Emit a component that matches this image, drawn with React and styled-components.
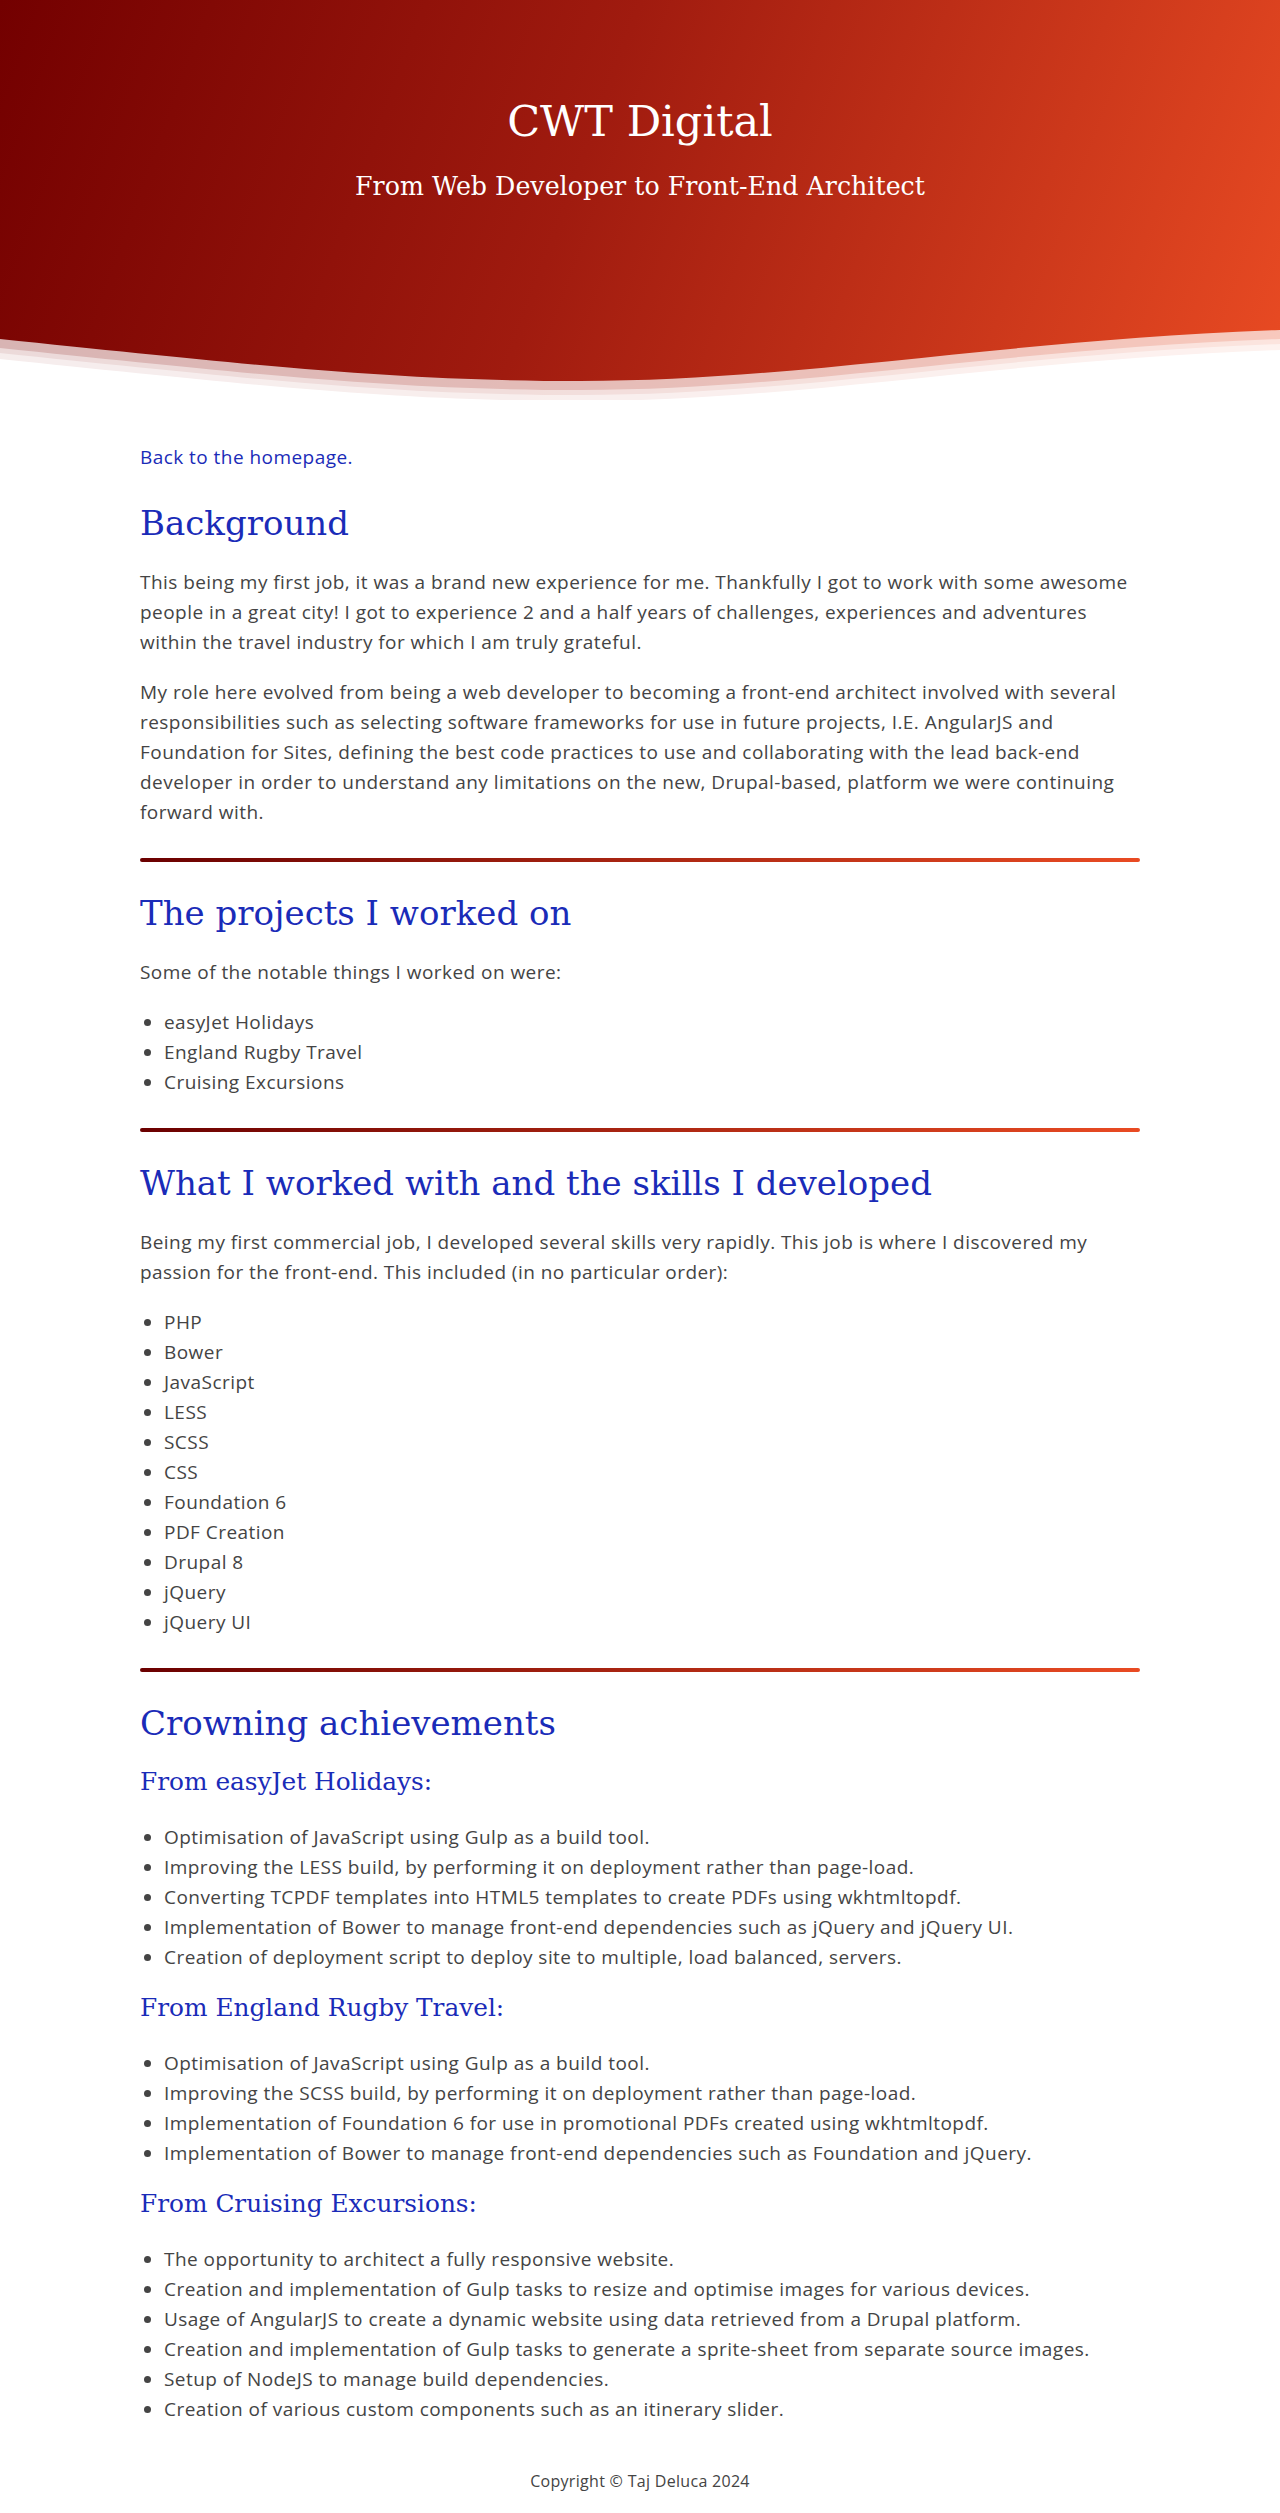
import React from 'react';
import styled, { createGlobalStyle } from 'styled-components';

const GlobalStyle = createGlobalStyle`
  * { box-sizing: border-box; }
  body {
    margin: 0;
    background: #fff;
    color: #444;
    font-family: "Open Sans", Lato, sans-serif;
  }
`

const Header = styled.header`
  background: linear-gradient(110deg, #730000 0%, #a01b0f 45%, #e94b23 100%);
  color: #fff;
  text-align: center;
`

const Hero = styled.div`
  height: 320px;
  padding-top: 95px;
`

const Title = styled.h1`
  margin: 0;
  font-family: "DejaVu Serif", serif;
  font-weight: normal;
  font-size: 43px;
  line-height: 53px;
`

const Subtitle = styled.p`
  margin: 24px 0 0;
  font-family: "DejaVu Serif", serif;
  font-size: 25.3px;
  line-height: 29px;
`

const WaveSvg = styled.svg`
  display: block;
  width: 100%;
  height: 80px;
`

const curve = (d) =>
  `M0,${19 + d} C260,${46 + d} 400,${61 + d} 580,${61 + d} C800,${61 + d} 1000,${20 + d} 1280,${10 + d} L1280,80 L0,80 Z`

const Wave = () => (
  <WaveSvg viewBox="0 0 1280 80" preserveAspectRatio="none">
    <path d={curve(0)} fill="#fff" opacity="0.7" />
    <path d={curve(9)} fill="#fff" opacity="0.5" />
    <path d={curve(14)} fill="#fff" opacity="0.5" />
    <path d={curve(20)} fill="#fff" />
  </WaveSvg>
)

const Main = styled.main`
  width: 1000px;
  margin: 0 auto;
  padding-top: 42px;
  font-size: 19px;
  line-height: 30px;
  letter-spacing: 0.45px;
`

const Text = styled.p`
  margin: 0 0 20px;
`

const BackLink = styled.a`
  color: #1a2bb8;
  text-decoration: none;
`

const Heading = styled.h2`
  margin: 31px 0 23px;
  font-family: "DejaVu Serif", serif;
  font-weight: normal;
  font-size: 34px;
  line-height: 41px;
  letter-spacing: normal;
  color: #1a2bb8;
`

const SubHeading = styled.h3`
  margin: 21px 0 26px;
  font-family: "DejaVu Serif", serif;
  font-weight: normal;
  font-size: 24.8px;
  line-height: 29px;
  letter-spacing: normal;
  color: #1a2bb8;
`

const List = styled.ul`
  margin: 0 0 20px;
  padding-left: 24px;
`

const Divider = styled.hr`
  margin: 31px 0;
  height: 4px;
  border: 0;
  border-radius: 2px;
  background: linear-gradient(90deg, #6b0000, #e94b23);
`

const Footer = styled.footer`
  padding: 25px 0 23px;
  text-align: center;
  font-size: 16px;
  line-height: 24px;
  letter-spacing: 0.3px;
  color: #444;
`

const projects = ['easyJet Holidays', 'England Rugby Travel', 'Cruising Excursions']

const skills = [
  'PHP', 'Bower', 'JavaScript', 'LESS', 'SCSS', 'CSS', 'Foundation 6',
  'PDF Creation', 'Drupal 8', 'jQuery', 'jQuery UI',
]

const achievements = [
  {
    from: 'From easyJet Holidays:',
    items: [
      'Optimisation of JavaScript using Gulp as a build tool.',
      'Improving the LESS build, by performing it on deployment rather than page-load.',
      'Converting TCPDF templates into HTML5 templates to create PDFs using wkhtmltopdf.',
      'Implementation of Bower to manage front-end dependencies such as jQuery and jQuery UI.',
      'Creation of deployment script to deploy site to multiple, load balanced, servers.',
    ],
  },
  {
    from: 'From England Rugby Travel:',
    items: [
      'Optimisation of JavaScript using Gulp as a build tool.',
      'Improving the SCSS build, by performing it on deployment rather than page-load.',
      'Implementation of Foundation 6 for use in promotional PDFs created using wkhtmltopdf.',
      'Implementation of Bower to manage front-end dependencies such as Foundation and jQuery.',
    ],
  },
  {
    from: 'From Cruising Excursions:',
    items: [
      'The opportunity to architect a fully responsive website.',
      'Creation and implementation of Gulp tasks to resize and optimise images for various devices.',
      'Usage of AngularJS to create a dynamic website using data retrieved from a Drupal platform.',
      'Creation and implementation of Gulp tasks to generate a sprite-sheet from separate source images.',
      'Setup of NodeJS to manage build dependencies.',
      'Creation of various custom components such as an itinerary slider.',
    ],
  },
]

export default function App() {
  return (
    <>
      <GlobalStyle />
      <Header>
        <Hero>
          <Title>CWT Digital</Title>
          <Subtitle>From Web Developer to Front-End Architect</Subtitle>
        </Hero>
        <Wave />
      </Header>

      <Main>
        <Text>
          <BackLink href="#">Back to the homepage.</BackLink>
        </Text>

        <Heading>Background</Heading>
        <Text>
          This being my first job, it was a brand new experience for me. Thankfully I got to work with some awesome
          people in a great city! I got to experience 2 and a half years of challenges, experiences and adventures
          within the travel industry for which I am truly grateful.
        </Text>
        <Text>
          My role here evolved from being a web developer to becoming a front-end architect involved with several
          responsibilities such as selecting software frameworks for use in future projects, I.E. AngularJS and
          Foundation for Sites, defining the best code practices to use and collaborating with the lead back-end
          developer in order to understand any limitations on the new, Drupal-based, platform we were continuing
          forward with.
        </Text>

        <Divider />

        <Heading>The projects I worked on</Heading>
        <Text>Some of the notable things I worked on were:</Text>
        <List>
          {projects.map((p) => <li key={p}>{p}</li>)}
        </List>

        <Divider />

        <Heading>What I worked with and the skills I developed</Heading>
        <Text>
          Being my first commercial job, I developed several skills very rapidly. This job is where I discovered my
          passion for the front-end. This included (in no particular order):
        </Text>
        <List>
          {skills.map((s) => <li key={s}>{s}</li>)}
        </List>

        <Divider />

        <Heading>Crowning achievements</Heading>
        {achievements.map((a) => (
          <React.Fragment key={a.from}>
            <SubHeading>{a.from}</SubHeading>
            <List>
              {a.items.map((i) => <li key={i}>{i}</li>)}
            </List>
          </React.Fragment>
        ))}
      </Main>

      <Footer>Copyright © Taj Deluca 2024</Footer>
    </>
  )
}
